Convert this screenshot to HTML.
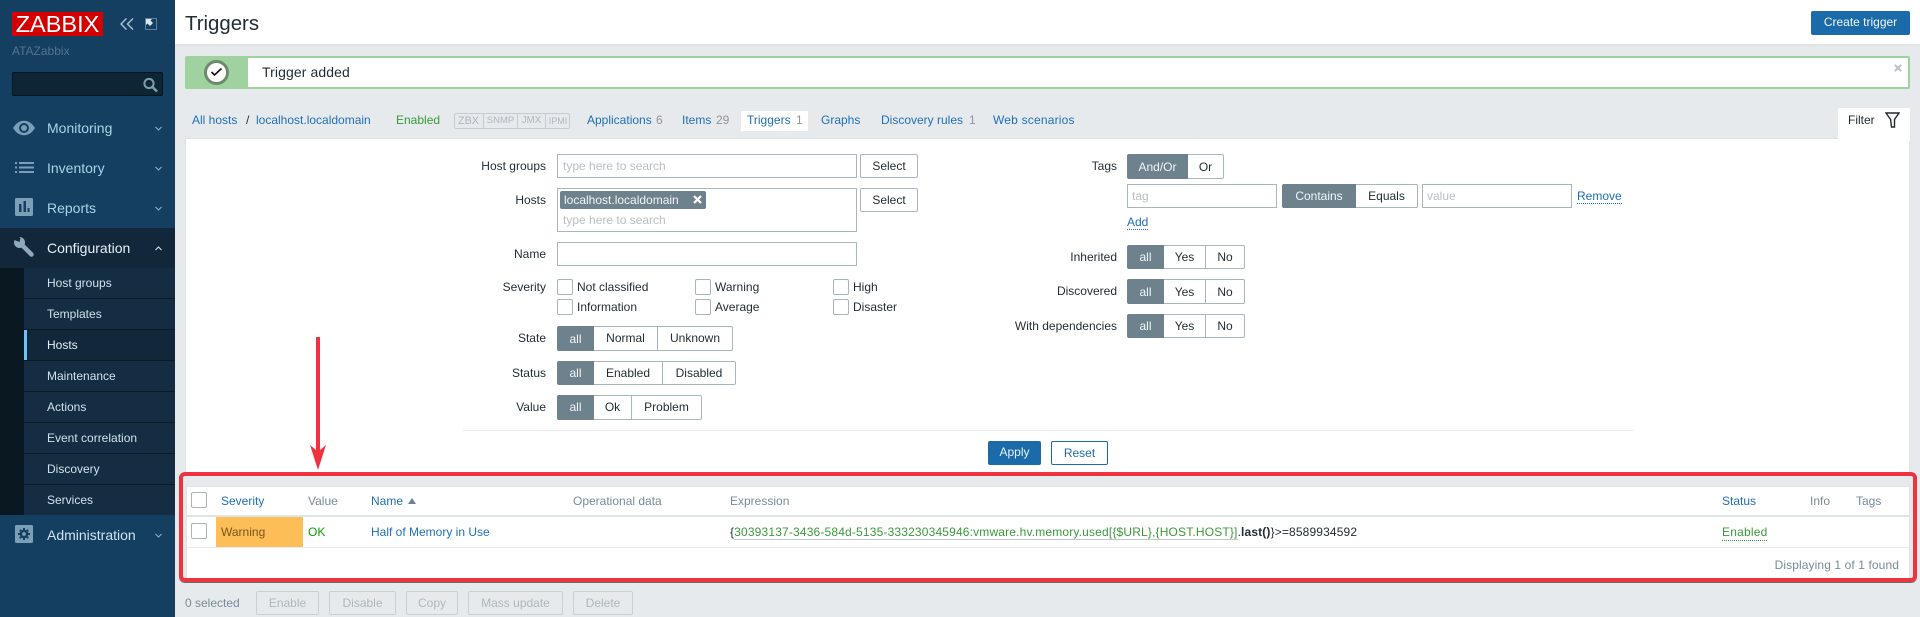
<!DOCTYPE html>
<html lang="en"><head><meta charset="utf-8"><title>Triggers</title>
<style>
*{box-sizing:border-box}
html,body{margin:0;padding:0;width:1920px;height:617px;overflow:hidden;background:#e7eaed;font:12px "Liberation Sans",Arial,sans-serif;color:#1f2c33}
div,span,svg{position:absolute;white-space:nowrap}
.t{line-height:16px;height:16px}
.m{font-size:14px;color:#a9d4e6;left:47px;line-height:18px;height:18px}
.sub{left:24px;width:151px;height:30px;background:#152d42;color:#cfe2ec;line-height:30px;padding-left:23px}
.sep{left:24px;width:151px;height:1px;background:#0b1a25}
.ch{left:154px;width:9px;height:9px}
.b{color:#1f6fb8}
.l{color:#1f2c33;text-align:right;width:150px;line-height:16px;height:16px}
.in{background:#fff;border:1px solid #a7b5bd;height:24px}
.btn{background:#fff;border:1px solid #a7b5bd;height:24px;border-radius:2px;text-align:center;line-height:22px;color:#1f2c33}
.seg{background:#fff;border:1px solid #a7b5bd;text-align:center;color:#1f2c33;border-left:0}
.on{background:#6e828e;color:#f2f5f6;border:1px solid #6e828e;border-radius:2px 0 0 2px}
.ph{color:#b9bfc3}
.cb{background:#fff;border:1px solid #a7b5bd;width:16px;height:16px;border-radius:2px}
.g{color:#8a979e}
.dis{border:1px solid #c9d0d4;border-radius:2px;height:24px;top:591px;text-align:center;line-height:22px;color:#acb8be;background:#e7eaed}
.z{top:113px;height:16px;line-height:16px;text-align:center;color:#acb7be}
</style></head><body>

<!-- sidebar -->
<div style="left:0;top:0;width:175px;height:617px;background:#153f60"></div>
<div style="left:12px;top:12px;width:91px;height:24px;background:#d40000;color:#fff;font-size:23.500px;line-height:25px;text-align:center">ZABBIX</div>
<svg style="left:120px;top:18px" width="14" height="12" viewBox="0 0 14 12" fill="none" stroke="#a9c4d4" stroke-width="1.400"><path d="M6.500 .5 1 6l5.500 5.500M13 .5 7.500 6l5.500 5.500"/></svg>
<svg style="left:145px;top:18px" width="12" height="12" viewBox="0 0 12 12" fill="none"><rect x=".5" y=".5" width="11" height="11" stroke="#a9c4d4" stroke-dasharray="1 1"/><path d="M1 1h6L5.500 2.500 8 5 5 8 2.500 5.500 1 7z" fill="#dbe7ef"/></svg>
<div class="t" style="left:12px;top:43px;color:#4f7590">ATAZabbix</div>
<div style="left:12px;top:72px;width:151px;height:24px;background:#0e2536;border:1px solid #081621;border-radius:2px"></div>
<svg style="left:142px;top:77px" width="17" height="16" viewBox="0 0 17 16" fill="none" stroke="#7e9bad"><circle cx="7" cy="6.500" r="4.600" stroke-width="2"/><path d="M10.500 10l4.500 4.500" stroke-width="2.600"/></svg>

<svg style="left:13px;top:120px" width="22" height="16" viewBox="0 0 22 16"><path d="M0 8C3 3 7 .8 11 .8S19 3 22 8c-3 5-7 7.200-11 7.200S3 13 0 8z" fill="#7a9fb6"/><circle cx="11" cy="8" r="5" fill="#153f60"/><circle cx="11" cy="8" r="3" fill="#7a9fb6"/></svg>
<div class="m" style="top:119px">Monitoring</div>
<svg style="left:15px;top:162px" width="19" height="11" viewBox="0 0 19 11" fill="#7a9fb6"><path d="M0 0h2v2H0zM4 0h15v2H4zM0 4.500h2v2H0zM4 4.500h15v2H4zM0 9h2v2H0zM4 9h15v2H4z"/></svg>
<div class="m" style="top:159px">Inventory</div>
<svg style="left:15px;top:198px" width="18" height="18" viewBox="0 0 18 18"><rect width="18" height="18" rx="1.500" fill="#7a9fb6"/><path d="M4 6h2.500v8H4zM8.500 3h2.500v11H8.500zM12.500 10h2v4h-2z" fill="#153f60"/></svg>
<div class="m" style="top:199px">Reports</div>
<div style="left:0;top:228px;width:175px;height:40px;background:#12283a"></div>
<svg style="left:14px;top:237px" width="20" height="20" viewBox="0 0 20 20"><circle cx="5.500" cy="5.500" r="5.500" fill="#8daabb"/><path d="M6 6l11.500 11.500" stroke="#8daabb" stroke-width="4.500" stroke-linecap="round"/><path d="M-1 2.500 5.500 5 6.500 1 4 -1z" fill="#12283a"/></svg>
<div class="m" style="top:239px;color:#e6f1f6">Configuration</div>
<svg class="ch" style="top:124px" viewBox="0 0 9 9" fill="none" stroke="#8fb0c4" stroke-width="1.100"><path d="M1.500 3 4.500 6 7.500 3"/></svg>
<svg class="ch" style="top:164px" viewBox="0 0 9 9" fill="none" stroke="#8fb0c4" stroke-width="1.100"><path d="M1.500 3 4.500 6 7.500 3"/></svg>
<svg class="ch" style="top:204px" viewBox="0 0 9 9" fill="none" stroke="#8fb0c4" stroke-width="1.100"><path d="M1.500 3 4.500 6 7.500 3"/></svg>
<svg class="ch" style="top:244px" viewBox="0 0 9 9" fill="none" stroke="#d6e5ee" stroke-width="1.100"><path d="M1.500 6 4.500 3 7.500 6"/></svg>

<div style="left:0;top:268px;width:24px;height:247px;background:#0a1821"></div>
<div class="sub" style="top:268px">Host groups</div><div class="sep" style="top:298px"></div>
<div class="sub" style="top:299px">Templates</div><div class="sep" style="top:329px"></div>
<div class="sub" style="top:330px;background:#12283a;color:#e6f1f6">Hosts</div><div style="left:24px;top:330px;width:3px;height:30px;background:#70c2f2"></div><div class="sep" style="top:360px"></div>
<div class="sub" style="top:361px">Maintenance</div><div class="sep" style="top:391px"></div>
<div class="sub" style="top:392px">Actions</div><div class="sep" style="top:422px"></div>
<div class="sub" style="top:423px">Event correlation</div><div class="sep" style="top:453px"></div>
<div class="sub" style="top:454px">Discovery</div><div class="sep" style="top:484px"></div>
<div class="sub" style="top:485px">Services</div>
<svg style="left:15px;top:525px" width="18" height="18" viewBox="0 0 18 18"><rect width="18" height="18" rx="1.500" fill="#7a9fb6"/><circle cx="9" cy="9" r="4.300" fill="#153f60"/><path d="M9 3v12M3 9h12M4.800 4.800l8.400 8.400M13.200 4.800l-8.400 8.400" stroke="#153f60" stroke-width="2"/><circle cx="9" cy="9" r="1.900" fill="#7a9fb6"/></svg>
<div class="m" style="top:526px;color:#cfe4ee">Administration</div>
<svg class="ch" style="top:531px" viewBox="0 0 9 9" fill="none" stroke="#8fb0c4" stroke-width="1.100"><path d="M1.500 3 4.500 6 7.500 3"/></svg>

<!-- header -->
<div style="left:175px;top:0;width:1745px;height:46px;background:#fff;border-bottom:2px solid #dfe4e7"></div>
<div style="left:185px;top:12px;font-size:20.400px;line-height:24px;color:#1f2c33">Triggers</div>
<div style="left:1811px;top:11px;width:99px;height:24px;background:#1b6bab;border-radius:2px;color:#f2f7fa;text-align:center;line-height:23px">Create trigger</div>

<!-- message -->
<div style="left:185px;top:56px;width:1725px;height:33px;background:#a0d2a0;border-radius:2px"></div>
<div style="left:248px;top:58px;width:1660px;height:29px;background:#fff"></div>
<div style="left:204px;top:60px;width:25px;height:25px;border-radius:50%;background:#fff;border:3px solid #6d8a6e"></div>
<svg style="left:210px;top:67px" width="13" height="10" viewBox="0 0 13 10" fill="none" stroke="#111" stroke-width="1.600"><path d="M1.500 5l3 3L11.500 1.500"/></svg>
<div style="left:262px;top:63px;font-size:14px;line-height:18px;color:#1f2c33;letter-spacing:.1px">Trigger added</div>
<svg style="left:1894px;top:64px" width="8" height="8" viewBox="0 0 8 8" stroke="#b7c2c9" stroke-width="2"><path d="M.8 .8l6.400 6.400M7.200 .8l-6.400 6.400"/></svg>

<!-- breadcrumb -->
<div class="t b" style="left:192px;top:112px">All hosts</div>
<div class="t" style="left:246px;top:112px">/</div>
<div class="t b" style="left:256px;top:112px">localhost.localdomain</div>
<div class="t" style="left:396px;top:112px;color:#3a9a3a">Enabled</div>
<div style="left:454px;top:113px;width:116px;height:16px;border:1px solid #c5ccd1;border-radius:2px"></div>
<div class="z" style="left:454px;width:29px;font-size:10.800px">ZBX</div><div class="z" style="left:483px;width:34px;border-left:1px solid #c5ccd1;font-size:9.500px">SNMP</div><div class="z" style="left:517px;width:28px;border-left:1px solid #c5ccd1;font-size:9.700px">JMX</div><div class="z" style="left:545px;width:25px;border-left:1px solid #c5ccd1;font-size:9px">IPMI</div>
<div class="t b" style="left:587px;top:112px">Applications</div><div class="t g" style="left:656px;top:112px">6</div>
<div class="t b" style="left:682px;top:112px">Items</div><div class="t g" style="left:716px;top:112px">29</div>
<div style="left:741px;top:111px;width:67px;height:20px;background:#fff;border-radius:1px"></div>
<div class="t b" style="left:747px;top:112px">Triggers</div><div class="t g" style="left:796px;top:112px">1</div>
<div class="t b" style="left:821px;top:112px">Graphs</div>
<div class="t b" style="left:881px;top:112px">Discovery rules</div><div class="t g" style="left:969px;top:112px">1</div>
<div class="t b" style="left:993px;top:112px;letter-spacing:.2px">Web scenarios</div>

<!-- filter panel -->
<div style="left:185px;top:138px;width:1725px;height:345px;background:#fff;border:1px solid #dfe4e7;border-bottom:0"></div>
<div style="left:1838px;top:108px;width:72px;height:33px;background:#fff;border-radius:2px 2px 0 0"></div>
<div class="t" style="left:1848px;top:112px">Filter</div>
<svg style="left:1885px;top:112px" width="15" height="16" viewBox="0 0 15 16" fill="none" stroke="#1f2c33" stroke-width="1.400"><path d="M1 1h13L9.500 7.500V15h-3l-.9-7.500z"/></svg>

<div class="l" style="left:396px;top:158px">Host groups</div>
<div class="in" style="left:557px;top:154px;width:300px"></div><div class="t ph" style="left:563px;top:158px">type here to search</div>
<div class="btn" style="left:860px;top:154px;width:58px">Select</div>
<div class="l" style="left:396px;top:192px">Hosts</div>
<div class="in" style="left:557px;top:188px;width:300px;height:44px"></div>
<div style="left:560px;top:191px;width:146px;height:18px;background:#6e828e;border-radius:2px;color:#f2f5f6;line-height:18px;padding-left:4px">localhost.localdomain</div>
<svg style="left:693px;top:195px" width="9" height="9" viewBox="0 0 9 9" stroke="#fff" stroke-width="2.200"><path d="M1 1l7 7M8 1l-7 7"/></svg>
<div class="t ph" style="left:563px;top:212px">type here to search</div>
<div class="btn" style="left:860px;top:188px;width:58px">Select</div>
<div class="l" style="left:396px;top:246px">Name</div>
<div class="in" style="left:557px;top:242px;width:300px"></div>

<div class="l" style="left:396px;top:279px">Severity</div>
<div class="cb" style="left:557px;top:279px"></div><div class="t" style="left:577px;top:279px">Not classified</div>
<div class="cb" style="left:695px;top:279px"></div><div class="t" style="left:715px;top:279px">Warning</div>
<div class="cb" style="left:833px;top:279px"></div><div class="t" style="left:853px;top:279px">High</div>
<div class="cb" style="left:557px;top:299px"></div><div class="t" style="left:577px;top:299px">Information</div>
<div class="cb" style="left:695px;top:299px"></div><div class="t" style="left:715px;top:299px">Average</div>
<div class="cb" style="left:833px;top:299px"></div><div class="t" style="left:853px;top:299px">Disaster</div>

<div class="l" style="left:396px;top:330px">State</div>
<div class="seg on" style="left:557px;top:326px;width:37px;height:25px;line-height:24px">all</div>
<div class="seg" style="left:594px;top:326px;width:64px;height:25px;line-height:23px">Normal</div>
<div class="seg" style="left:658px;top:326px;width:75px;height:25px;line-height:23px;border-radius:0 2px 2px 0">Unknown</div>
<div class="l" style="left:396px;top:365px">Status</div>
<div class="seg on" style="left:557px;top:361px;width:37px;height:24px;line-height:22px">all</div>
<div class="seg" style="left:594px;top:361px;width:69px;height:24px;line-height:22px">Enabled</div>
<div class="seg" style="left:663px;top:361px;width:73px;height:24px;line-height:22px;border-radius:0 2px 2px 0">Disabled</div>
<div class="l" style="left:396px;top:399px">Value</div>
<div class="seg on" style="left:557px;top:395px;width:37px;height:25px;line-height:23px">all</div>
<div class="seg" style="left:594px;top:395px;width:38px;height:25px;line-height:23px">Ok</div>
<div class="seg" style="left:632px;top:395px;width:70px;height:25px;line-height:23px;border-radius:0 2px 2px 0">Problem</div>

<div class="l" style="left:967px;top:158px">Tags</div>
<div class="seg on" style="left:1127px;top:154px;width:61px;height:25px;line-height:24px">And/Or</div>
<div class="seg" style="left:1188px;top:154px;width:36px;height:25px;line-height:24px;border-radius:0 2px 2px 0">Or</div>
<div class="in" style="left:1127px;top:184px;width:150px"></div><div class="t ph" style="left:1132px;top:188px">tag</div>
<div class="seg on" style="left:1282px;top:184px;width:74px;height:24px;line-height:22px">Contains</div>
<div class="seg" style="left:1356px;top:184px;width:62px;height:24px;line-height:22px;border-radius:0 2px 2px 0">Equals</div>
<div class="in" style="left:1422px;top:184px;width:150px"></div><div class="t ph" style="left:1427px;top:188px">value</div>
<div class="t b" style="left:1577px;top:188px;height:16px;border-bottom:1px dotted #1f6fb8">Remove</div>
<div class="t b" style="left:1127px;top:214px;border-bottom:1px dotted #1f6fb8">Add</div>

<div class="l" style="left:967px;top:249px">Inherited</div>
<div class="seg on" style="left:1127px;top:245px;width:37px;height:24px;line-height:22px">all</div>
<div class="seg" style="left:1164px;top:245px;width:42px;height:24px;line-height:22px">Yes</div>
<div class="seg" style="left:1206px;top:245px;width:39px;height:24px;line-height:22px;border-radius:0 2px 2px 0">No</div>
<div class="l" style="left:967px;top:283px">Discovered</div>
<div class="seg on" style="left:1127px;top:279px;width:37px;height:25px;line-height:24px">all</div>
<div class="seg" style="left:1164px;top:279px;width:42px;height:25px;line-height:24px">Yes</div>
<div class="seg" style="left:1206px;top:279px;width:39px;height:25px;line-height:24px;border-radius:0 2px 2px 0">No</div>
<div class="l" style="left:967px;top:318px">With dependencies</div>
<div class="seg on" style="left:1127px;top:314px;width:37px;height:24px;line-height:22px">all</div>
<div class="seg" style="left:1164px;top:314px;width:42px;height:24px;line-height:22px">Yes</div>
<div class="seg" style="left:1206px;top:314px;width:39px;height:24px;line-height:22px;border-radius:0 2px 2px 0">No</div>

<div style="left:463px;top:430px;width:1171px;height:1px;background:#e8ebee"></div>
<div style="left:988px;top:441px;width:53px;height:24px;background:#1b6bab;border-radius:2px;color:#e8f2f8;text-align:center;line-height:23px">Apply</div>
<div style="left:1051px;top:441px;width:57px;height:24px;background:#fff;border:1px solid #1b6bab;border-radius:2px;color:#1b6bab;text-align:center;line-height:22px">Reset</div>

<!-- table area -->
<div style="left:179px;top:472px;width:1738px;height:110px;background:#e7eaed"></div>
<div style="left:186px;top:486px;width:1724px;height:92px;background:#fff;border:1px solid #dfe4e7;border-bottom:0"></div>
<div style="left:187px;top:515px;width:1722px;height:2px;background:#dfe4e7"></div>
<div style="left:187px;top:547px;width:1722px;height:1px;background:#e8ebee"></div>
<div class="cb" style="left:191px;top:492px"></div>
<div class="cb" style="left:191px;top:523px"></div>
<div class="t b" style="left:221px;top:493px">Severity</div>
<div class="t" style="left:308px;top:493px;color:#768d99">Value</div>
<div class="t b" style="left:371px;top:493px">Name</div>
<svg style="left:408px;top:498px" width="8" height="6" viewBox="0 0 8 6" fill="#6e828e"><path d="M4 0 8 6H0z"/></svg>
<div class="t" style="left:573px;top:493px;color:#768d99">Operational data</div>
<div class="t" style="left:730px;top:493px;color:#768d99">Expression</div>
<div class="t b" style="left:1722px;top:493px">Status</div>
<div class="t" style="left:1810px;top:493px;color:#768d99">Info</div>
<div class="t" style="left:1856px;top:493px;color:#768d99">Tags</div>
<div style="left:216px;top:517px;width:87px;height:30px;background:#fdbe58"></div>
<div class="t" style="left:221px;top:524px;color:#7a5520">Warning</div>
<div class="t" style="left:308px;top:524px;color:#0aa000">OK</div>
<div class="t b" style="left:371px;top:524px">Half of Memory in Use</div>
<div class="t" style="left:730px;top:524px;color:#1f2c33;letter-spacing:.14px">{<span style="position:static;color:#3a9a3a;border-bottom:1px solid #bcc6cb;letter-spacing:.165px">30393137-3436-584d-5135-333230345946:vmware.hv.memory.used[{$URL},{HOST.HOST}]</span>.<b>last()</b>}&gt;=8589934592</div>
<div class="t" style="left:1722px;top:524px;height:17px;color:#3a9a3a;border-bottom:1px dotted #3a9a3a;letter-spacing:.2px">Enabled</div>
<div class="t" style="right:21px;top:557px;color:#768d99;letter-spacing:.1px">Displaying 1 of 1 found</div>

<!-- red annotations -->
<div style="left:179px;top:472px;width:1738px;height:110px;border:4px solid #ee333f;border-radius:6px;box-shadow:0 1px 0 #6b6b6b"></div>
<svg style="left:310px;top:337px" width="16" height="133" viewBox="0 0 16 133"><path d="M6 0h4v113l6-5-8 25L0 108l6 5z" fill="#ee333f"/></svg>

<!-- bottom -->
<div class="t" style="left:185px;top:595px;color:#768d99">0 selected</div>
<div class="dis" style="left:256px;width:63px">Enable</div>
<div class="dis" style="left:329px;width:67px">Disable</div>
<div class="dis" style="left:406px;width:52px">Copy</div>
<div class="dis" style="left:468px;width:95px">Mass update</div>
<div class="dis" style="left:573px;width:60px">Delete</div>
</body></html>
